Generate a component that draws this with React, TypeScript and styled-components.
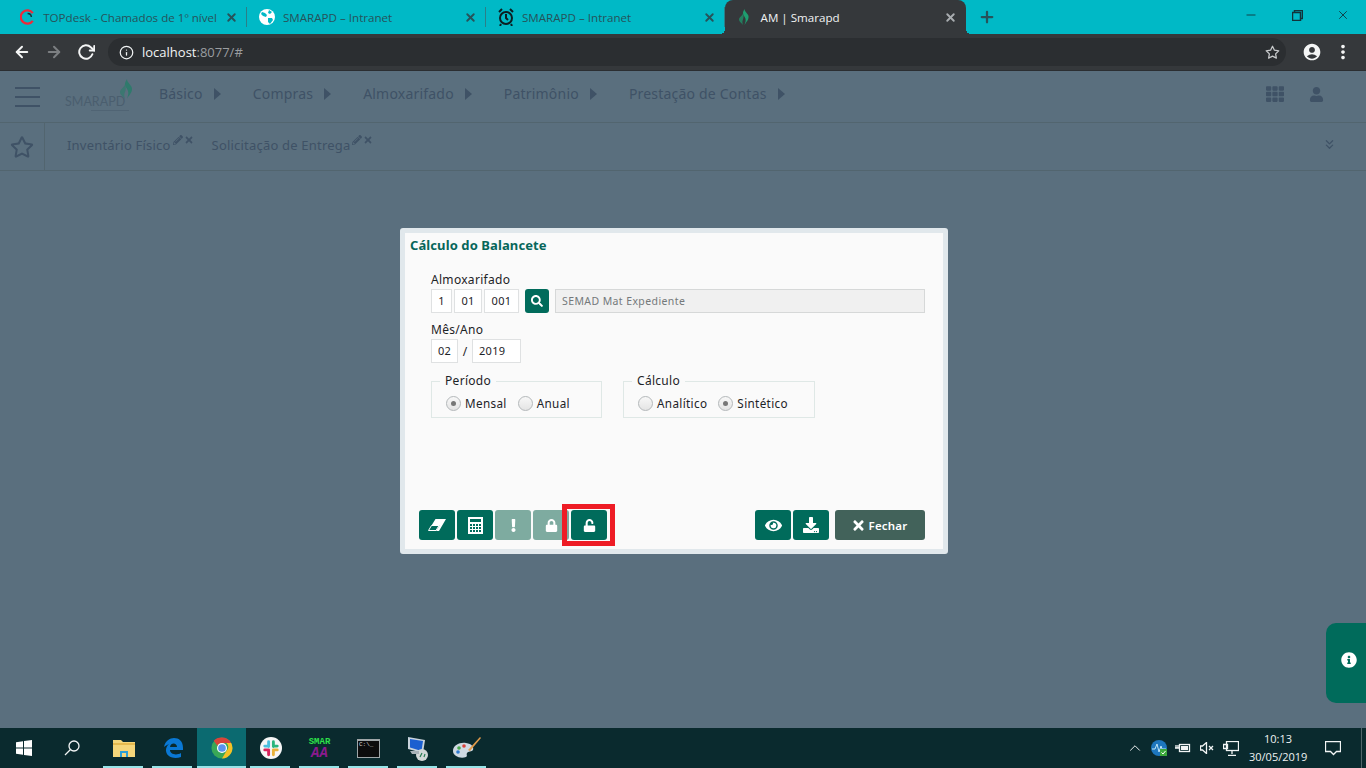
import styled, { createGlobalStyle, css } from 'styled-components'
import {
  FaDownload, FaExclamation, FaEye, FaInfoCircle, FaLock, FaPencilAlt, FaRegStar, FaSearch, FaTh, FaTimes, FaUnlock, FaUser,
} from 'react-icons/fa'
import { FiArrowLeft, FiArrowRight, FiChevronsDown, FiChevronUp, FiInfo, FiMinus, FiPlus, FiRotateCw, FiStar, FiX } from 'react-icons/fi'
import { MdAccountCircle, MdMoreVert } from 'react-icons/md'

const Global = createGlobalStyle`
  html, body { margin: 0; padding: 0; width: 1366px; height: 768px; overflow: hidden; }
  * { box-sizing: border-box; }
  body { font-family: "Noto Sans", "DejaVu Sans", sans-serif; }
`

const Screen = styled.div`
  width: 1366px;
  height: 768px;
  display: flex;
  flex-direction: column;
`

// browser chrome
const TabStrip = styled.div`
  height: 34px;
  background: #00b9c6;
  display: flex;
  padding-left: 8px;
  flex: none;
`
const activeFlares = css`
  &::before,
  &::after {
    content: '';
    position: absolute;
    bottom: 0;
    width: 5px;
    height: 5px;
  }
  &::before {
    left: -5px;
    background: radial-gradient(circle at 0 0, transparent 5px, #35383b 5px);
  }
  &::after {
    right: -5px;
    background: radial-gradient(circle at 100% 0, transparent 5px, #35383b 5px);
  }
`
const separator = css`
  &::after {
    content: '';
    position: absolute;
    right: 0;
    top: 7px;
    height: 20px;
    width: 1px;
    background: #2b7f88;
  }
`
const Tab = styled.div<{ $active?: boolean; $pad?: number; $gap?: number }>`
  width: ${p => (p.$active ? 241 : 239)}px;
  height: 34px;
  display: flex;
  align-items: center;
  padding-left: ${p => p.$pad ?? 12}px;
  padding-right: 9px;
  gap: ${p => p.$gap ?? 8}px;
  position: relative;
  font: 11.6px "Open Sans", "Liberation Sans", sans-serif;
  color: ${p => (p.$active ? '#f1f3f4' : '#26535a')};
  background: ${p => (p.$active ? '#35383b' : 'transparent')};
  border-radius: ${p => (p.$active ? '8px 8px 0 0' : '0')};
  ${p => (p.$active ? activeFlares : separator)}
`
const TabLabel = styled.span`
  flex: 1;
  white-space: nowrap;
`
const TabClose = styled(FiX)<{ $active?: boolean }>`
  width: 13px;
  height: 13px;
  stroke-width: 3.5;
  color: ${p => (p.$active ? '#a9adb0' : '#26535a')};
  flex: none;
`
const NewTab = styled.div`
  width: 42px;
  display: flex;
  align-items: center;
  justify-content: center;
  color: #26535a;
  font-size: 18px;
  svg {
    stroke-width: 3;
  }
`
const WindowButtons = styled.div`
  margin-left: auto;
  display: flex;
  align-items: flex-start;
`
const WindowButton = styled.div`
  width: 46px;
  height: 30px;
  display: flex;
  align-items: center;
  justify-content: center;
  color: #12333a;
  font-size: 14px;
  svg {
    stroke-width: 1.5;
  }
`
const Toolbar = styled.div`
  height: 37px;
  flex: none;
  background: #35383b;
  display: flex;
  align-items: center;
  border-bottom: 1px solid #2b2e31;
  padding-left: 13px;
`
const NavIcon = styled.div<{ $dim?: boolean }>`
  width: 32px;
  display: flex;
  color: ${p => (p.$dim ? '#7c7f82' : '#f4f5f5')};
  font-size: 18px;
  svg {
    stroke-width: 2.6;
  }
`
const Omnibox = styled.div`
  margin-left: -1px;
  width: 1178px;
  height: 28px;
  border-radius: 14px;
  background: #2b2e31;
  display: flex;
  align-items: center;
  padding-left: 11px;
  padding-right: 6px;
  font: 13px "Open Sans", "Liberation Sans", sans-serif;
  color: #f1f3f4;
`
const Host = styled.span`
  margin-left: 8px;
`
const Port = styled.span`
  color: #9a9da0;
`
const OmniStar = styled.span`
  margin-left: auto;
  display: flex;
  color: #c9cbcd;
  font-size: 15px;
`
const ToolbarRight = styled.div`
  display: flex;
  align-items: center;
  color: #f4f5f5;
  margin-left: 16px;
  gap: 10px;
`

// page behind the dimmed overlay
const Page = styled.div`
  flex: 1;
  position: relative;
  background: #5a6f7e;
  color: #3f5266;
  font-size: 14px;
  letter-spacing: 0.2px;
`
const MainNav = styled.div`
  height: 52px;
  display: flex;
  align-items: center;
  border-bottom: 1px solid #52656f;
  padding-left: 15px;
`
const Burger = styled.div`
  width: 25px;
  height: 20px;
  display: flex;
  flex-direction: column;
  justify-content: space-between;
  span {
    height: 2px;
    background: #3f5266;
  }
`
const Logo = styled.div`
  width: 69px;
  margin-left: 25px;
  margin-right: 25px;
  position: relative;
  height: 34px;
  font: 12.5px "Lato", "Noto Sans", sans-serif;
  letter-spacing: 0;
  color: #4a5e6e;
  padding-top: 14px;
  white-space: nowrap;
  svg {
    position: absolute;
    left: 55px;
    top: -1px;
  }
`
const Tagline = styled.span`
  position: absolute;
  left: 26px;
  top: 30px;
  width: 38px;
  height: 1px;
  background: #506474;
`
const MenuItem = styled.div`
  display: flex;
  align-items: center;
  margin-right: 31px;
  margin-top: -6px;
  gap: 11px;
  white-space: nowrap;
  &::after {
    content: '';
    border-left: 7px solid #3f5266;
    border-top: 6px solid transparent;
    border-bottom: 6px solid transparent;
    margin-right: 1px;
  }
`
const NavRight = styled.div`
  margin-left: auto;
  margin-right: 42px;
  display: flex;
  align-items: center;
  gap: 25px;
  margin-top: -5px;
  font-size: 18px;
  color: #3f5266;
`
const Favorites = styled.div`
  height: 48px;
  display: flex;
  align-items: center;
  border-bottom: 1px solid #52656f;
`
const FavStar = styled.div`
  width: 45px;
  height: 47px;
  padding-left: 10px;
  display: flex;
  align-items: center;
  border-right: 1px solid #52656f;
  font-size: 24px;
`
const FavItem = styled.div`
  margin-left: 22px;
  margin-top: -4px;
  display: flex;
  align-items: flex-start;
  white-space: nowrap;
  font-size: 13px;
  & + & {
    margin-left: 18px;
  }
`
const FavTools = styled.span`
  display: flex;
  gap: 1px;
  font-size: 10px;
  margin-left: 2px;
  margin-top: -1px;
`
const Collapse = styled.div`
  margin-left: auto;
  margin-right: 29px;
  margin-top: -5px;
  display: flex;
  font-size: 15px;
`

// dialog
const Overlay = styled.div`
  position: absolute;
  inset: 0;
  padding: 157px 0 0 400px;
  letter-spacing: 0;
`
const Dialog = styled.div`
  width: 548px;
  height: 326px;
  background: #fafafa;
  border: 5px solid #e1e8ec;
  border-radius: 3px;
  display: flex;
  flex-direction: column;
  padding: 0 18px 0 5px;
  color: #1d2327;
`
const Title = styled.h1`
  margin: 2px 0 0;
  font-size: 13px;
  line-height: 20px;
  font-weight: 700;
  letter-spacing: 0.1px;
  color: #07665a;
`
const Form = styled.div`
  padding: 17px 0 0 21px;
`
const Label = styled.div`
  font-size: 12px;
  line-height: 15px;
  margin-bottom: 2px;
  letter-spacing: 0.3px;
`
const Row = styled.div<{ $mb: number }>`
  display: flex;
  align-items: center;
  gap: 2px;
  height: 24px;
  margin-bottom: ${p => p.$mb}px;
`
const Field = styled.div<{ $w: number; $left?: boolean }>`
  width: ${p => p.$w}px;
  height: 24px;
  border: 1px solid #dfe1e2;
  background: #fff;
  font-size: 11px;
  letter-spacing: 0.3px;
  line-height: 22px;
  text-align: ${p => (p.$left ? 'left' : 'center')};
  padding-left: ${p => (p.$left ? 6 : 0)}px;
`
const SearchButton = styled.div`
  width: 24px;
  height: 24px;
  margin: 0 4px 0 4px;
  border-radius: 3px;
  background: #006b5b;
  color: #fff;
  font-size: 12px;
  display: flex;
  align-items: center;
  justify-content: center;
`
const ReadOnly = styled.div`
  flex: 1;
  height: 24px;
  border: 1px solid #d6d8d8;
  background: #f0f0f0;
  color: #74797b;
  font-size: 10.5px;
  letter-spacing: 0.4px;
  line-height: 22px;
  padding-left: 6px;
`
const Slash = styled.span`
  width: 10px;
  text-align: center;
  font-size: 12px;
`
const Groups = styled.div`
  display: flex;
  gap: 21px;
  margin-top: 18px;
`
const Group = styled.fieldset<{ $w: number }>`
  width: ${p => p.$w}px;
  height: 37px;
  margin: 0;
  padding: 0 0 0 14px;
  border: 1px solid #dfe8e6;
  display: flex;
  align-items: center;
  position: relative;
`
const Legend = styled.div`
  position: absolute;
  top: -8px;
  left: 8px;
  padding: 0 5px;
  background: #fafafa;
  font-size: 12px;
  line-height: 14px;
  letter-spacing: 0.3px;
`
const RadioRow = styled.label`
  display: flex;
  align-items: center;
  gap: 4px;
  margin-right: 11px;
  font-size: 11.7px;
  letter-spacing: 0.35px;
  margin-top: 7px;
`
const Radio = styled.span<{ $on?: boolean }>`
  width: 15px;
  height: 15px;
  border-radius: 50%;
  border: 1px solid #b4b8ba;
  background: linear-gradient(#f8f8f8, #e4e4e4);
  display: flex;
  align-items: center;
  justify-content: center;
  &::after {
    content: '';
    width: 5px;
    height: 5px;
    border-radius: 50%;
    background: ${p => (p.$on ? '#777' : 'transparent')};
  }
`
const Footer = styled.div`
  margin-top: auto;
  margin-bottom: 9px;
  padding-left: 9px;
  display: flex;
  gap: 2px;
`
const IconButton = styled.div<{ $disabled?: boolean }>`
  width: 36px;
  height: 30px;
  border-radius: 3px;
  background: ${p => (p.$disabled ? '#7eaba0' : '#006b5b')};
  color: #fff;
  font-size: 16px;
  display: flex;
  align-items: center;
  justify-content: center;
  position: relative;
`
const Highlight = styled.span`
  position: absolute;
  left: -9px;
  top: -6px;
  width: 53px;
  height: 42px;
  border: 5px solid #ee1c25;
`
const Spacer = styled.div`
  flex: 1;
`
const CloseButton = styled.div`
  width: 90px;
  height: 30px;
  margin-left: 4px;
  padding-right: 2px;
  border-radius: 3px;
  background: #42625a;
  color: #fff;
  font-size: 11.5px;
  font-weight: 600;
  display: flex;
  align-items: center;
  justify-content: center;
  gap: 3px;
  letter-spacing: 0.2px;
  svg {
    font-size: 15px;
  }
`
const InfoTab = styled.div`
  position: absolute;
  right: 0;
  top: 552px;
  width: 40px;
  height: 80px;
  background: #006b5b;
  border-radius: 10px 0 0 10px;
  display: flex;
  align-items: center;
  justify-content: center;
  padding: 0 0 7px 6px;
  color: #fff;
  font-size: 16px;
`

// windows taskbar
const Taskbar = styled.div`
  height: 40px;
  flex: none;
  background: #0a2a2e;
  display: flex;
  align-items: stretch;
  color: #f2f5f5;
`
const StartCell = styled.div<{ $w: number }>`
  width: ${p => p.$w}px;
  display: flex;
  align-items: center;
  justify-content: center;
`
const Pinned = styled.div<{ $active?: boolean }>`
  width: 49px;
  display: flex;
  align-items: center;
  justify-content: center;
  position: relative;
  background: ${p => (p.$active ? '#0b6a70' : 'transparent')};
  &::after {
    content: '';
    position: absolute;
    bottom: 0;
    left: ${p => (p.$active ? 0 : 4)}px;
    right: ${p => (p.$active ? 0 : 5)}px;
    height: 2px;
    background: #97e4e8;
  }
`
const SmarIcon = styled.div`
  width: 26px;
  text-align: center;
  font: 700 9px/9px "Liberation Mono", monospace;
  color: #2ee24a;
  em {
    display: block;
    font-size: 14px;
    line-height: 12px;
    color: #8b1a8f;
    font-weight: 700;
  }
`
const CmdIcon = styled.div`
  width: 23px;
  height: 19px;
  background: #0c0c0c;
  border: 1px solid #9fa6a8;
  border-top-width: 2px;
  color: #d8d8d8;
  font: 6px/8px "Liberation Mono", monospace;
  padding-left: 1px;
  overflow: hidden;
`
const Tray = styled.div`
  margin-left: auto;
  display: flex;
  align-items: center;
  color: #f2f5f5;
  padding-right: 8px;
`
const TrayItem = styled.div<{ $w: number }>`
  width: ${p => p.$w}px;
  display: flex;
  align-items: center;
  justify-content: center;
  svg {
    stroke-width: 1.3;
  }
`
const Clock = styled.div`
  width: 58px;
  margin: 0 6px;
  white-space: nowrap;
  text-align: center;
  font: 11px/18px "Open Sans", "Liberation Sans", sans-serif;
  color: #eef2f2;
`
const ShowDesktop = styled.div`
  width: 5px;
  border-left: 1px solid #4f666a;
  flex: none;
`

const Flame = ({ size = 16, color = '#1e9d6f' }: { size?: number; color?: string }) => (
  <svg width={size * 0.6} height={size} viewBox="0 0 12 20">
    <path d="M7 0c0 4 5 6 5 10 0 4-3 6-5 10 .6-3 2-5 1-8C7 9 5 8 5 5c0-2 1-3 2-5z" fill={color} />
    <path d="M5 5C5 8 0 10 0 13c0 3 3 4 5 7-1-3-1-5 0-7 1-2 1-5 0-8z" fill={color} opacity=".7" />
  </svg>
)

const Globe = () => (
  <svg width="16" height="16" viewBox="0 0 16 16">
    <circle cx="8" cy="8" r="8" fill="#fff" />
    <path d="M3 3l3 1 2 2-1 2-3-1-2-2zM10 1l3 2-2 2-2-1zM9 9l4 0 1 2-3 4-2-2z" fill="#00b9c6" />
  </svg>
)

const AlarmClock = () => (
  <svg width="16" height="18" viewBox="0 0 16 18" fill="none" stroke="#0c1f22" strokeWidth="2">
    <circle cx="8" cy="10" r="6" />
    <path d="M8 6v4l2 2M1 4l3-3M15 4l-3-3M3 16l-1 2M13 16l1 2" />
  </svg>
)

const TopdeskIcon = () => (
  <svg width="16" height="16" viewBox="0 0 16 16" fill="none" stroke="#ee2a3a" strokeWidth="2.4">
    <path d="M13.500 4a7 7 0 1 0 0 8" />
    <path d="M8 4.200a4 4 0 0 1 4 3.800" stroke="#12333a" strokeWidth="1.600" />
  </svg>
)

const EraserIcon = () => (
  <svg width="18" height="12" viewBox="0 0 18 12">
    <path d="M7.500 0H18L11 12H8l3.500-5.500h-8z" fill="#fff" />
    <path d="M3.500 6.500H11l-3 5H.5z" fill="none" stroke="#fff" strokeWidth="1" />
  </svg>
)

const CalculatorIcon = () => (
  <svg width="15" height="17" viewBox="0 0 15 17">
    <path d="M0 0h15v17H0z" fill="#fff" />
    <path d="M2 2h11v3H2z" fill="#006b5b" />
    {[7, 10, 13].map(y =>
      [2, 5, 8, 11].map(x => <path key={`${x}-${y}`} d={`M${x} ${y}h2v2h-2z`} fill="#006b5b" />),
    )}
  </svg>
)

const WinLogo = () => (
  <svg width="16" height="16" viewBox="0 0 16 16" fill="#fff">
    <path d="M0 2.300l7-1v6.200H0zM8 1.100L16 0v7.500H8zM0 8.500h7v6.200l-7-1zM8 8.500h8V16l-8-1.100z" />
  </svg>
)

const SearchGlass = () => (
  <svg width="16" height="16" viewBox="0 0 16 16" fill="none" stroke="#f2f5f5" strokeWidth="1.3">
    <circle cx="10" cy="6" r="5" />
    <path d="M6.500 9.500L1 15" />
  </svg>
)

const Explorer = () => (
  <svg width="22" height="18" viewBox="0 0 22 18">
    <path d="M0 1h8l2 2h12v15H0z" fill="#f5d67a" />
    <path d="M0 4h22v2H0z" fill="#e5b94e" />
    <path d="M7 12h8v6h-2v-4H9v4H7z" fill="#2a9fd8" />
  </svg>
)

const Edge = () => (
  <svg width="20" height="20" viewBox="0 0 20 20" fill="none">
    <path d="M1 9C2 3 7 0 11 0c5 0 9 3 9 10v2H7c0 4 6 6 11 3v4c-6 2-14 1-15-6-.3-3 1-5 3-7-2 1-4 2-5 3zm6 0h7c0-4-6-5-7 0z" fill="#0a78d4" />
  </svg>
)

const Chrome = () => (
  <svg width="22" height="22" viewBox="0 0 24 24">
    <circle cx="12" cy="12" r="11.500" fill="#3aa757" />
    <path d="M12 .5A11.500 11.500 0 0 1 22 6.500H12a5.500 5.500 0 0 0-5 3L3 4a11.500 11.500 0 0 1 9-3.500z" fill="#d9433a" />
    <path d="M22 6.500A11.500 11.500 0 0 1 12 23.500l5-8.500a5.500 5.500 0 0 0-.2-8.500z" fill="#f6c026" />
    <circle cx="12" cy="12" r="5.500" fill="#fff" />
    <circle cx="12" cy="12" r="4.200" fill="#5a93ee" />
  </svg>
)

const Slack = () => (
  <svg width="22" height="22" viewBox="0 0 23 23">
    <circle cx="11.500" cy="11.500" r="11.500" fill="#f6f6f6" />
    <g strokeWidth="3" strokeLinecap="round" fill="none">
      <path d="M9 5v5M5 9.500h4" stroke="#4ac0e0" />
      <path d="M14 5v5M14 9.500h4" stroke="#2bb57c" />
      <path d="M14 13.500v5M14 13.500h4" stroke="#e8b23a" />
      <path d="M9 13.500v5M5 13.500h4" stroke="#d8245c" />
    </g>
  </svg>
)

const Network = () => (
  <svg width="24" height="26" viewBox="0 0 24 26">
    <path d="M2 2l17 3-2 13-15-4z" fill="#c9d3dc" />
    <path d="M4 4l13 2-1.500 10L4 12.500z" fill="#1b5fd0" />
    <circle cx="16" cy="20" r="6" fill="#d4d8d8" />
    <path d="M4 16h9v3H6z" fill="#a9b2b8" />
    <path d="M14 22l2-4M18 22l1-3" stroke="#2b7d55" strokeWidth="1.200" />
  </svg>
)

const Palette = () => (
  <svg width="30" height="24" viewBox="0 0 30 24">
    <path d="M1 15c0-6 7-9 13-8 6 1 8 4 7 7-1 2-5 1-6 3-1 2 1 3-1 4-6 2-13-1-13-6z" fill="#cfd9e2" />
    <circle cx="7" cy="12" r="1.800" fill="#49a84b" />
    <circle cx="12" cy="10" r="1.800" fill="#d8423a" />
    <circle cx="6" cy="16" r="1.800" fill="#2e7ad1" />
    <path d="M28 1l1 1-11 13-2-1z" fill="#e09a4a" />
  </svg>
)

const PulseGlobe = () => (
  <svg width="16" height="16" viewBox="0 0 16 16">
    <circle cx="8" cy="8" r="8" fill="#1d76bd" />
    <path d="M1 9h3l2-5 2 8 2-6 1 3h4" fill="none" stroke="#bfe6f7" strokeWidth="1" />
    <rect x="9" y="9" width="7" height="7" fill="#3aa83a" />
    <path d="M10.500 12.500l1.500 1.500 2.500-3" fill="none" stroke="#fff" strokeWidth="1" />
  </svg>
)

const Battery = () => (
  <svg width="16" height="12" viewBox="0 0 16 12" fill="none" stroke="#f2f5f5">
    <rect x="4.500" y="2.500" width="10" height="7" />
    <rect x="6" y="4" width="7" height="4" fill="#f2f5f5" stroke="none" />
    <path d="M0 6h4M1 3v3M3 3v3" />
  </svg>
)

const Muted = () => (
  <svg width="15" height="12" viewBox="0 0 15 12" fill="none" stroke="#f2f5f5">
    <path d="M.5 4h2l4-3.500v11l-4-3.500h-2z" />
    <path d="M9 4l4 4M13 4l-4 4" />
  </svg>
)

const LanIcon = () => (
  <svg width="16" height="15" viewBox="0 0 16 15" fill="none" stroke="#f2f5f5">
    <rect x="3.500" y=".5" width="12" height="9" />
    <path d="M9 10v3M5 14.500h8M.5 3.500h4v4h-4z" />
  </svg>
)

const Bubble = () => (
  <svg width="16" height="15" viewBox="0 0 16 15" fill="none" stroke="#f2f5f5">
    <path d="M.5.5h15v10h-4l-3 3-3-3h-5z" />
  </svg>
)

const menu = ['Básico', 'Compras', 'Almoxarifado', 'Patrimônio', 'Prestação de Contas']

export default function App() {
  return (
    <Screen>
      <Global />
      <TabStrip>
        <Tab>
          <TopdeskIcon />
          <TabLabel>TOPdesk - Chamados de 1º nível</TabLabel>
          <TabClose />
        </Tab>
        <Tab>
          <Globe />
          <TabLabel>SMARAPD – Intranet</TabLabel>
          <TabClose />
        </Tab>
        <Tab>
          <AlarmClock />
          <TabLabel>SMARAPD – Intranet</TabLabel>
          <TabClose />
        </Tab>
        <Tab $active $pad={14} $gap={12}>
          <Flame />
          <TabLabel>AM | Smarapd</TabLabel>
          <TabClose $active />
        </Tab>
        <NewTab>
          <FiPlus />
        </NewTab>
        <WindowButtons>
          <WindowButton><FiMinus /></WindowButton>
          <WindowButton>
            <svg width="11" height="11" viewBox="0 0 11 11" fill="none" stroke="#12333a">
              <path d="M.5 2.500h8v8h-8zM2.500 2.500v-2h8v8h-2" />
            </svg>
          </WindowButton>
          <WindowButton><FiX /></WindowButton>
        </WindowButtons>
      </TabStrip>
      <Toolbar>
        <NavIcon><FiArrowLeft /></NavIcon>
        <NavIcon $dim><FiArrowRight /></NavIcon>
        <NavIcon><FiRotateCw /></NavIcon>
        <Omnibox>
          <FiInfo size={15} />
          <Host>localhost<Port>:8077/#</Port></Host>
          <OmniStar><FiStar /></OmniStar>
        </Omnibox>
        <ToolbarRight>
          <MdAccountCircle size={20} />
          <MdMoreVert size={22} />
        </ToolbarRight>
      </Toolbar>
      <Page>
        <MainNav>
          <Burger><span /><span /><span /></Burger>
          <Logo>
            SMARAPD
            <Flame size={20} color="#2f7a6c" />
            <Tagline />
          </Logo>
          {menu.map(label => (
            <MenuItem key={label}>{label}</MenuItem>
          ))}
          <NavRight>
            <FaTh />
            <FaUser size={15} />
          </NavRight>
        </MainNav>
        <Favorites>
          <FavStar><FaRegStar /></FavStar>
          <FavItem>
            Inventário Físico
            <FavTools><FaPencilAlt /><FaTimes /></FavTools>
          </FavItem>
          <FavItem>
            Solicitação de Entrega
            <FavTools><FaPencilAlt /><FaTimes /></FavTools>
          </FavItem>
          <Collapse><FiChevronsDown /></Collapse>
        </Favorites>
        <Overlay>
          <Dialog>
            <Title>Cálculo do Balancete</Title>
            <Form>
              <Label>Almoxarifado</Label>
              <Row $mb={9}>
                <Field $w={21}>1</Field>
                <Field $w={28}>01</Field>
                <Field $w={35}>001</Field>
                <SearchButton><FaSearch /></SearchButton>
                <ReadOnly>SEMAD Mat Expediente</ReadOnly>
              </Row>
              <Label>Mês/Ano</Label>
              <Row $mb={0}>
                <Field $w={27}>02</Field>
                <Slash>/</Slash>
                <Field $w={49} $left>2019</Field>
              </Row>
              <Groups>
                <Group $w={171}>
                  <Legend>Período</Legend>
                  <RadioRow><Radio $on />Mensal</RadioRow>
                  <RadioRow><Radio />Anual</RadioRow>
                </Group>
                <Group $w={192}>
                  <Legend>Cálculo</Legend>
                  <RadioRow><Radio />Analítico</RadioRow>
                  <RadioRow><Radio $on />Sintético</RadioRow>
                </Group>
              </Groups>
            </Form>
            <Footer>
              <IconButton><EraserIcon /></IconButton>
              <IconButton><CalculatorIcon /></IconButton>
              <IconButton $disabled><FaExclamation size={13} /></IconButton>
              <IconButton $disabled><FaLock size={13} /></IconButton>
              <IconButton>
                <FaUnlock size={13} />
                <Highlight />
              </IconButton>
              <Spacer />
              <IconButton><FaEye size={17} /></IconButton>
              <IconButton><FaDownload /></IconButton>
              <CloseButton><FaTimes />Fechar</CloseButton>
            </Footer>
          </Dialog>
        </Overlay>
        <InfoTab><FaInfoCircle /></InfoTab>
      </Page>
      <Taskbar>
        <StartCell $w={48}><WinLogo /></StartCell>
        <StartCell $w={48}><SearchGlass /></StartCell>
        <StartCell $w={3} />
        <Pinned><Explorer /></Pinned>
        <Pinned><Edge /></Pinned>
        <Pinned $active><Chrome /></Pinned>
        <Pinned><Slack /></Pinned>
        <Pinned>
          <SmarIcon>SMAR<em>AA</em></SmarIcon>
        </Pinned>
        <Pinned><CmdIcon>C:\_</CmdIcon></Pinned>
        <Pinned><Network /></Pinned>
        <Pinned><Palette /></Pinned>
        <Tray>
          <TrayItem $w={24}><FiChevronUp size={18} /></TrayItem>
          <TrayItem $w={24}><PulseGlobe /></TrayItem>
          <TrayItem $w={24}><Battery /></TrayItem>
          <TrayItem $w={24}><Muted /></TrayItem>
          <TrayItem $w={24}><LanIcon /></TrayItem>
          <Clock>10:13<br />30/05/2019</Clock>
          <TrayItem $w={40}><Bubble /></TrayItem>
        </Tray>
        <ShowDesktop />
      </Taskbar>
    </Screen>
  )
}
